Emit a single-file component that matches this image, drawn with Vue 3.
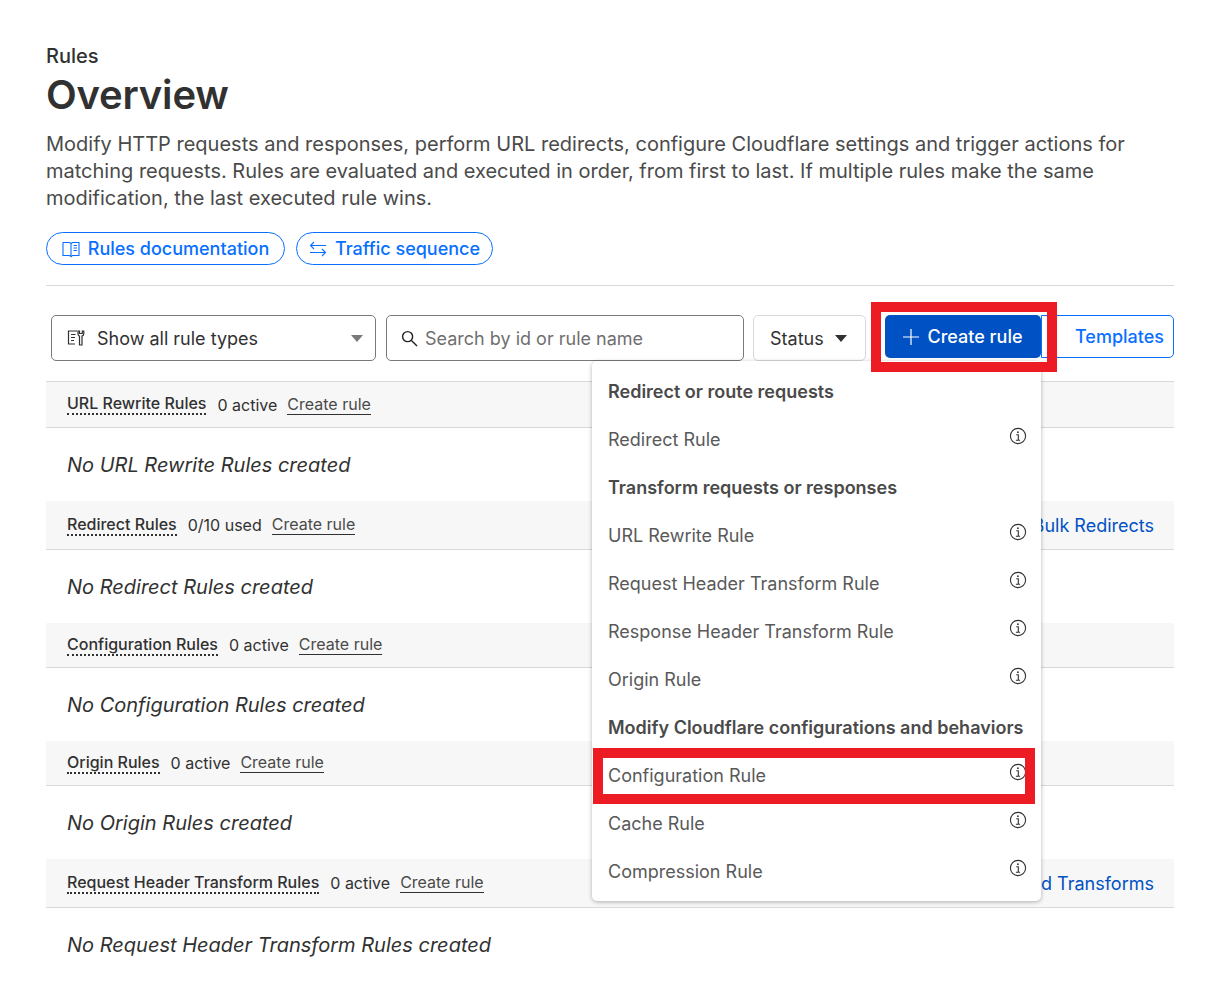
<script setup>
const sections = [
  { title: 'URL Rewrite Rules', count: '0 active', empty: 'No URL Rewrite Rules created', size: 'mid' },
  { title: 'Redirect Rules', count: '0/10 used', empty: 'No Redirect Rules created', size: 'tall', link: 'Bulk Redirects' },
  { title: 'Configuration Rules', count: '0 active', empty: 'No Configuration Rules created', size: 'low' },
  { title: 'Origin Rules', count: '0 active', empty: 'No Origin Rules created', size: 'low' },
  { title: 'Request Header Transform Rules', count: '0 active', empty: 'No Request Header Transform Rules created', size: 'tall', link: 'Managed Transforms' },
]

const menu = [
  { heading: 'Redirect or route requests' },
  { label: 'Redirect Rule' },
  { heading: 'Transform requests or responses' },
  { label: 'URL Rewrite Rule' },
  { label: 'Request Header Transform Rule' },
  { label: 'Response Header Transform Rule' },
  { label: 'Origin Rule' },
  { heading: 'Modify Cloudflare configurations and behaviors' },
  { label: 'Configuration Rule', marked: true },
  { label: 'Cache Rule' },
  { label: 'Compression Rule' },
]
</script>

<template>
  <div class="page">
    <div class="crumb">Rules</div>
    <h1 class="title">Overview</h1>
    <p class="intro">
      Modify HTTP requests and responses, perform URL redirects, configure Cloudflare settings and trigger actions for
      matching requests. Rules are evaluated and executed in order, from first to last. If multiple rules make the same
      modification, the last executed rule wins.
    </p>

    <div class="pills">
      <a class="pill pill-docs">
        <svg class="pill-icon" viewBox="0 0 18 18" fill="none" stroke="currentColor" stroke-width="1.1">
          <path d="M1 2.5h6.5L9 3.5v13l-1.5-1H1z" />
          <path d="M9 3.5l1.5-1H17v13h-6.5l-1.5 1" />
          <path d="M11.5 5.5h3.5M11.5 8h3.5M11.5 10.500h3.500" />
        </svg>
        Rules documentation
      </a>
      <a class="pill pill-seq">
        <svg class="pill-icon" viewBox="0 0 18 18" fill="none" stroke="currentColor" stroke-width="1.1">
          <path d="M17 5.500H1.500M5 2L1.500 5.500 5 9" />
          <path d="M1 12.500h15.500M13 9l3.500 3.500L13 16" />
        </svg>
        Traffic sequence
      </a>
    </div>

    <hr class="rule" />

    <div class="toolbar">
      <div class="select">
        <svg class="select-icon" viewBox="0 0 18 18" fill="none" stroke="#313131" stroke-width="1.200">
          <path d="M10 2H1.500v13H8" />
          <path d="M4 5.500h4.500M4 8.500h4M4 11.500h3" />
          <path d="M11 2v2.500c0 1.500 1 2.500 1.500 2.500V16h2.500V7c.8-.2 1.800-1.200 1.800-2.500V2l-1.500 0v2.500h-2.800V2z" />
        </svg>
        <span class="select-text">Show all rule types</span>
        <span class="caret caret-soft"></span>
      </div>
      <div class="search">
        <svg class="search-icon" viewBox="0 0 18 18" fill="none" stroke="#222" stroke-width="1.500">
          <circle cx="7" cy="7" r="5.300" />
          <path d="M11 11l6 6" />
        </svg>
        <span class="search-text">Search by id or rule name</span>
      </div>
      <div class="status">Status <span class="caret"></span></div>
      <button class="create">
        <svg class="plus" viewBox="0 0 16 16" stroke="#fff" stroke-width="1.200"><path d="M8 0v16M0 8h16" /></svg>
        Create rule
      </button>
      <button class="templates">Templates</button>
      <div class="mark mark-create"></div>

      <div class="menu">
        <template v-for="row in menu" :key="row.heading || row.label">
          <div v-if="row.heading" class="menu-heading">{{ row.heading }}</div>
          <div v-else class="menu-item" :class="{ marked: row.marked }">
            <span>{{ row.label }}</span>
            <svg class="info" viewBox="0 0 18 18" fill="none" stroke="#313131">
              <circle cx="9" cy="9" r="7.600" stroke-width="1.100" />
              <path d="M7.300 7.800h2v5M6.900 13.200h4.200" stroke-width="1.100" />
              <circle cx="8.900" cy="5.200" r="0.900" fill="#313131" stroke="none" />
            </svg>
          </div>
        </template>
      </div>
    </div>

    <section v-for="s in sections" :key="s.title" class="group">
      <div class="group-head" :class="s.size">
        <span class="group-title">{{ s.title }}</span>
        <span class="group-count">{{ s.count }}</span>
        <a class="group-create">Create rule</a>
        <a v-if="s.link" class="group-link">{{ s.link }}</a>
      </div>
      <div class="group-empty">{{ s.empty }}</div>
    </section>
  </div>
</template>

<style scoped>
.page {
  padding: 44px 46px 0;
  color: #313131;
  font-family: Inter, "Liberation Sans", sans-serif;
}

.crumb {
  font-size: 20px;
  font-weight: 500;
  line-height: 24px;
}

.title {
  margin: 2px 0 0;
  font-size: 40px;
  font-weight: 600;
  line-height: 50px;
  letter-spacing: -0.2px;
}

.intro {
  margin: 11px 0 0;
  font-size: 20px;
  line-height: 27px;
  color: #4a4a4a;
}

.pills {
  display: flex;
  gap: 11px;
  margin-top: 20px;
}

.pill {
  display: flex;
  align-items: center;
  justify-content: center;
  gap: 8px;
  height: 33px;
  box-sizing: border-box;
  border: 1px solid #086fff;
  border-radius: 17px;
  color: #086fff;
  font-size: 18px;
  font-weight: 500;
}

.pill-docs {
  width: 239px;
}

.pill-seq {
  width: 197px;
}

.pill-icon {
  width: 18px;
  height: 18px;
}

.rule {
  margin: 20px 0 0;
  border: none;
  border-top: 1px solid #d9d9d9;
}

.toolbar {
  position: relative;
  display: flex;
  align-items: flex-start;
  height: 46px;
  margin-top: 29px;
  margin-bottom: 20px;
  padding-left: 5px;
}

.select,
.search,
.status {
  display: flex;
  align-items: center;
  box-sizing: border-box;
  height: 46px;
  border-radius: 5px;
  background: #fff;
  font-size: 18px;
}

.select {
  width: 325px;
  padding: 0 12px 0 15px;
  border: 1px solid #7a7a7a;
}

.select-icon {
  width: 18px;
  height: 18px;
  margin-right: 12px;
}

.select-text {
  flex: 1;
}

.search {
  width: 358px;
  margin-left: 10px;
  padding-left: 14px;
  border: 1px solid #7a7a7a;
}

.search-icon {
  width: 17px;
  height: 17px;
  margin-right: 7px;
}

.search-text {
  color: #6f6f6f;
}

.status {
  width: 113px;
  margin-left: 9px;
  padding-left: 16px;
  gap: 11px;
  border: 1px solid #d9d9d9;
}

.caret {
  width: 0;
  height: 0;
  border-left: 6.500px solid transparent;
  border-right: 6.500px solid transparent;
  border-top: 7px solid #313131;
}

.caret-soft {
  border-top-color: #7a7a7a;
}

.create {
  display: flex;
  align-items: center;
  justify-content: center;
  gap: 8px;
  width: 156px;
  height: 43px;
  margin-left: 19px;
  border: none;
  border-radius: 5px;
  background: #0051c3;
  color: #fff;
  font: 500 18px Inter, "Liberation Sans", sans-serif;
}

.plus {
  width: 16px;
  height: 16px;
}

.templates {
  width: 133px;
  height: 43px;
  padding-left: 30px;
  border: 1px solid #086fff;
  border-radius: 0 5px 5px 0;
  background: #fff;
  color: #086fff;
  font: 500 18px Inter, "Liberation Sans", sans-serif;
}

.mark {
  position: absolute;
  box-sizing: border-box;
  border: 10px solid #ed1c24;
  pointer-events: none;
}

.mark-create {
  left: 825px;
  top: -13px;
  width: 186px;
  height: 70px;
  z-index: 3;
}

.menu {
  position: absolute;
  left: 546px;
  top: 46px;
  z-index: 2;
  width: 449px;
  box-sizing: border-box;
  padding: 6px 16px;
  background: #fff;
  border-radius: 5px;
  box-shadow: 0 1px 4px rgba(0, 0, 0, 0.3);
  font-size: 18px;
}

.menu-heading,
.menu-item {
  display: flex;
  align-items: center;
  height: 48px;
}

.menu-heading {
  font-weight: 600;
  color: #4a4a4a;
  white-space: nowrap;
}

.menu-item {
  justify-content: space-between;
  color: #595959;
}

.menu-item.marked {
  position: relative;
}

.menu-item.marked::after {
  content: "";
  position: absolute;
  left: -15px;
  top: -3px;
  width: 442px;
  height: 56px;
  box-sizing: border-box;
  border: 10px solid #ed1c24;
}

.info {
  width: 18px;
  height: 18px;
  margin-right: -2px;
  margin-bottom: 7px;
}

.group-head {
  display: flex;
  align-items: center;
  box-sizing: border-box;
  padding: 0 20px 0 21px;
  background: #f7f7f7;
  border-bottom: 1px solid #d9d9d9;
  font-size: 16px;
}

.group-head.mid {
  height: 47px;
  border-top: 1px solid #d9d9d9;
}

.group-head.tall {
  height: 49px;
}

.group-head.low {
  height: 45px;
}

.group-title {
  font-weight: 500;
  line-height: 19px;
  border-bottom: 2px dotted #313131;
}

.group-count {
  margin-left: 11px;
}

.group-create {
  margin-left: 10px;
  line-height: 19px;
  border-bottom: 1px solid #313131;
  color: #4a4a4a;
}

.group-link {
  margin-left: auto;
  color: #0051c3;
  font-size: 18px;
}

.group-empty {
  display: flex;
  align-items: center;
  height: 73px;
  padding-left: 21px;
  font-size: 20px;
  font-style: italic;
}
</style>

<style>
html,
body {
  background: #fff;
}
</style>
